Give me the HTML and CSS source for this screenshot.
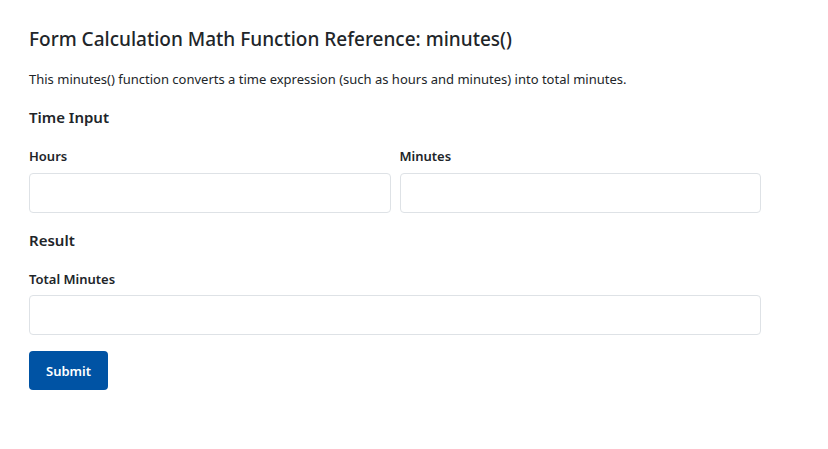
FILE: index.html
```html
<!DOCTYPE html>
<html lang="en">
<head>
<meta charset="utf-8">
<title>minutes()</title>
<link rel="stylesheet" href="styles.css">
</head>
<body>
<div class="container">
  <h1 class="title">Form Calculation Math Function Reference: minutes()</h1>
  <p class="desc">This minutes() function converts a time expression (such as hours and minutes) into total minutes.</p>
  <h2 class="section">Time Input</h2>
  <div class="row">
    <div class="field">
      <label class="label" for="hours">Hours</label>
      <input class="input" id="hours" type="text">
    </div>
    <div class="field">
      <label class="label" for="minutes">Minutes</label>
      <input class="input" id="minutes" type="text">
    </div>
  </div>
  <h2 class="section section-result">Result</h2>
  <div class="field">
    <label class="label label-tight" for="total">Total Minutes</label>
    <input class="input" id="total" type="text">
  </div>
  <button class="btn" type="button">Submit</button>
</div>
</body>
</html>
```
FILE: styles.css
```css
* { box-sizing: border-box; }
body {
  margin: 0;
  background: #fff;
  font-family: "Noto Sans", "Open Sans", sans-serif;
  color: #212529;
}
.container {
  width: 732px;
  margin-left: 29px;
  padding-top: 26px;
  display: flex;
  flex-direction: column;
}
.title {
  margin: 0;
  font-size: 19px;
  font-weight: 500;
  line-height: 26px;
}
.desc {
  margin: 18px 0 0;
  font-size: 13px;
  line-height: 18px;
}
.section {
  margin: 18px 0 0;
  font-size: 15px;
  font-weight: 600;
  line-height: 22px;
}
.section-result { margin-top: 16px; }
.row {
  display: grid;
  grid-template-columns: 1fr 1fr;
  gap: 9px;
}
.field {
  display: flex;
  flex-direction: column;
}
.label {
  margin: 19px 0 8px;
  font-size: 13px;
  font-weight: 600;
  line-height: 18px;
}
.label-tight { margin-bottom: 7px; }
.input {
  height: 40px;
  border: 1px solid #dee2e6;
  border-radius: 4px;
  background: #fff;
  font: inherit;
  padding: 6px 12px;
}
.btn {
  margin-top: 16px;
  align-self: flex-start;
  width: 79px;
  height: 39px;
  background: #0053a4;
  color: #fff;
  border: none;
  border-radius: 4px;
  font-family: inherit;
  font-size: 13px;
  font-weight: 600;
}
```
